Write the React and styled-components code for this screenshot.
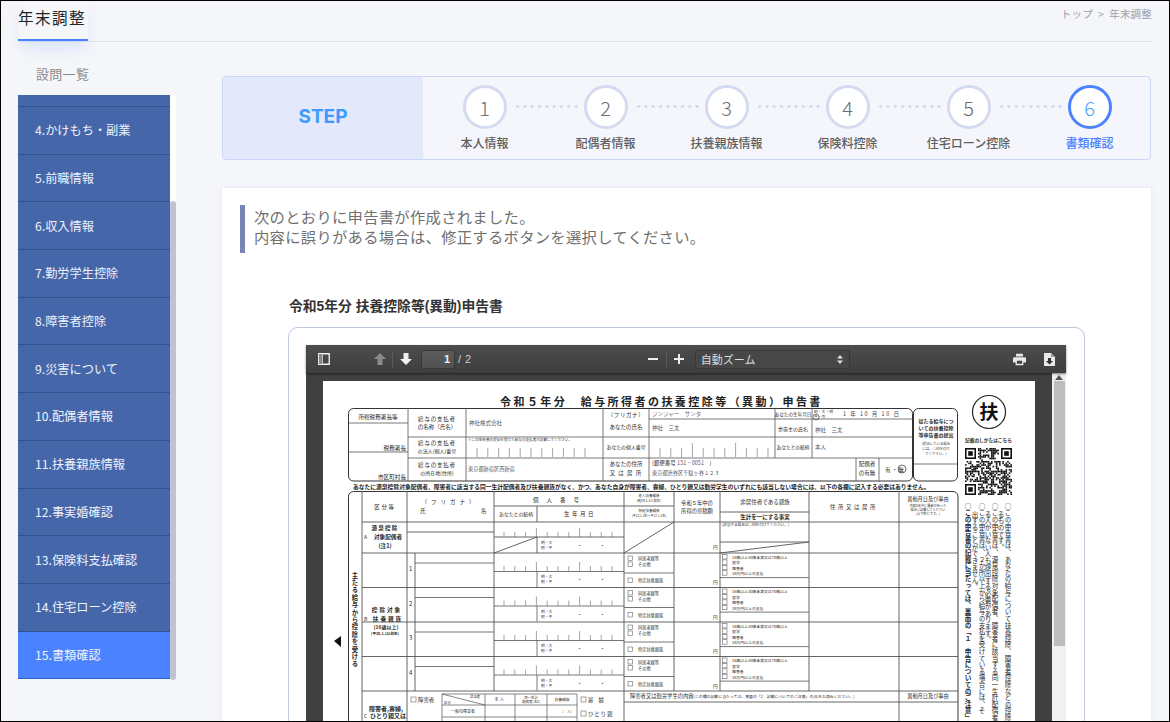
import React from "react";
import styled, { createGlobalStyle } from "styled-components";

const Global = createGlobalStyle`
  html, body { margin: 0; padding: 0; background: #f5f6fa; }
  body { font-family: "Noto Sans CJK JP", "Noto Sans", sans-serif; }
  * { box-sizing: border-box; }
`;

const Frame = styled.div`
  width: 1170px; height: 722px; border: 1px solid #000; overflow: hidden;
  background: #f5f6fa; padding: 0 17px; display: flex; flex-direction: column;
`;
const Header = styled.header`
  height: 41px; flex: none; display: flex; justify-content: space-between; align-items: flex-start;
  border-bottom: 1px solid #dfe3f0;
`;
const PageTitle = styled.h1`
  margin: 0; height: 40px; width: 70px; padding-top: 4px; font-size: 15.5px; line-height: 25px; font-weight: 400;
  letter-spacing: 1.5px; color: #222; white-space: nowrap;
  border-bottom: 2px solid #4a82ff; box-shadow: 0 10px 16px -4px rgba(74,130,255,.18);
`;
const Crumbs = styled.div`
  font-size: 10.5px; color: #a0a0a8; padding-top: 5px; line-height: 16px; letter-spacing: .2px;
`;
const Body = styled.div`display: flex; flex: 1; min-height: 0; gap: 46px;`;
const Aside = styled.aside`width: 158px; flex: none; display: flex; flex-direction: column;`;
const AsideTitle = styled.div`
  height: 53px; padding: 22px 0 0 18px; font-size: 13px; line-height: 20px; color: #8a8a8a; letter-spacing: .3px;
`;
const MenuWrap = styled.div`display: flex; height: 585px;`;
const Menu = styled.ul`list-style: none; margin: 0; padding: 0; width: 152px; overflow: hidden;`;
const MenuStub = styled.li`height: 12px; background: #4666aa; border-bottom: 1px solid #34508f;`;
const MenuItem = styled.li`
  height: 47.7px; padding: 0 0 0 17px; display: flex; align-items: center;
  font-size: 12.2px; color: #eef2fb;
  background: ${p => (p.$active ? "#4a82ff" : "#4666aa")};
  border-bottom: 1px solid ${p => (p.$active ? "#2f5fc8" : "#34508f")};
`;
const Track = styled.div`
  width: 6px; background: #fff; padding-top: 106px; display: flex; border-radius: 0 3px 3px 0;
`;
const Thumb = styled.div`flex: 1; background: #c2c3d2; border-radius: 3px;`;

const Main = styled.main`flex: 1; min-width: 0; padding-top: 34px; padding-right: 1px;`;
const StepCard = styled.section`
  height: 84px; display: flex; border: 1px solid #c9d6f7; border-radius: 4px; overflow: hidden; background: #f5f6fb;
`;
const StepHead = styled.div`
  width: 200px; flex: none; background: #e3e8fb; color: #3d9bff; font: 700 19px/1 "Inter", "Liberation Sans", sans-serif;
  display: flex; align-items: center; justify-content: center; padding-bottom: 4px;
`;
const Steps = styled.ol`
  list-style: none; margin: 0 0 0 1px; padding: 0; flex: 1; display: grid; grid-template-columns: repeat(6, 121px);
`;
const Step = styled.li`
  position: relative; display: flex; flex-direction: column; align-items: center; padding-top: 8px;
`;
const Dots = styled.span`
  position: absolute; left: 90px; top: 28px; width: 66px; height: 3px;
  background: radial-gradient(circle, #d4d9ee 1.4px, transparent 1.6px) 0 0 / 7.3px 3px repeat-x;
`;
const Circle = styled.span`
  width: 44px; height: 44px; border-radius: 50%; background: #fff; display: flex; align-items: center; justify-content: center;
  border: ${p => (p.$active ? "3px solid #4a82ff" : "3px solid #d5daf0")};
  color: ${p => (p.$active ? "#4a9eff" : "#6d6d6d")};
  font-size: 20px; font-weight: 300;
`;
const StepLabel = styled.span`
  margin-top: 5px; font-size: 12px; line-height: 17px; font-weight: 500; white-space: nowrap;
  color: ${p => (p.$active ? "#4a82ff" : "#5f5f5f")};
`;

const Card = styled.section`
  margin-top: 28px; background: #fff; height: 540px; padding: 17px 17px 0 18px;
  box-shadow: 0 0 4px rgba(180,185,210,.25);
`;
const Notice = styled.div`
  border-left: 5px solid #7a84b4; padding: 1px 0 0 9px; font-size: 15.3px; line-height: 20px; height: 48px; color: #707070;
  letter-spacing: .3px; white-space: nowrap;
`;
const DocTitle = styled.h2`
  margin: 44px 0 0 49px; font-size: 13.8px; line-height: 20px; font-weight: 700; color: #333; font-family: "Liberation Sans", "Noto Sans CJK JP", sans-serif;
`;
const DocBox = styled.div`
  margin: 10px 49px 0 48px; border: 1px solid #bcc6e2; border-radius: 10px; padding: 17px 18px 0 17px; height: 420px;
`;
const Viewer = styled.div`background: #404040; height: 380px;`;
const Toolbar = styled.div`
  height: 28px; display: flex; align-items: center; background: linear-gradient(#4c4c4c, #3e3e3e);
  box-shadow: 0 1px 2px rgba(0,0,0,.5); color: #e4e4e4; padding: 0 8px 0 11px; font-size: 11px;
  position: relative;
`;
const Tool = styled.span`display: inline-flex; width: 13px; justify-content: center; color: #e6e6e6;`;
const Sep = styled.span`width: 1px; height: 15px; background: #5a5a5a; margin: 0 6px 0 ${p => p.$l || 6}px;`;
const PageInput = styled.span`
  width: 34px; height: 19px; margin-left: 9px; border-radius: 2px; background: linear-gradient(#5b5b5b, #515151);
  border: 1px solid #383838; text-align: right; padding-right: 4px; font: 700 11px/17px "Liberation Sans", sans-serif; color: #eee;
`;
const PageCount = styled.span`margin-left: 3px; font: 11px "Liberation Sans", sans-serif; letter-spacing: .5px; color: #ccc;`;
const ZoomSelect = styled.span`
  width: 155px; height: 19px; margin-left: 9px; border: 1px solid #383838; border-radius: 2px; background: #474747;
  display: flex; align-items: center; justify-content: space-between; padding: 0 6px 0 5px; font-size: 11px; color: #ddd;
`;
const Stage = styled.div`display: flex; height: 352px; padding-top: 8px;`;
const Sheet = styled.div`margin-left: 17px; width: 712px; height: 341px; background: #fff; flex: none; overflow: hidden;`;
const VScroll = styled.div`
  margin-left: 17px; margin-top: -8px; width: 14px; background: #f0f0f0; padding: 2px 1px 0 2px; height: 352px;
  display: flex; flex-direction: column;
`;
const VThumb = styled.div`height: 265px; background: #bdbdbd; margin-top: 1px;`;
const FormSvg = styled.svg`display: block;`;
const T = styled.text`
  font-family: "Noto Sans CJK JP", sans-serif; fill: ${p => p.$c || "#2a2a2a"};
  font-weight: ${p => p.$b ? 700 : 400};
`;
const VT = styled(T)`writing-mode: vertical-rl;`;

const menu = ["4.かけもち・副業","5.前職情報","6.収入情報","7.勤労学生控除","8.障害者控除","9.災害について","10.配偶者情報","11.扶養親族情報","12.事実婚確認","13.保険料支払確認","14.住宅ローン控除","15.書類確認"];
const steps = ["本人情報","配偶者情報","扶養親族情報","保険料控除","住宅ローン控除","書類確認"];

const Lines = ({ list, w = 0.8, c = "#555" }) => (
  <g stroke={c} strokeWidth={w}>
    {list.map((l, i) => <line key={i} x1={l[0]} y1={l[1]} x2={l[2]} y2={l[3]} />)}
  </g>
);
const Ticks = ({ x0, dx, n, y, h = 5, long = 9, every = 4 }) => (
  <g stroke="#666" strokeWidth=".6">
    {Array.from({ length: n }, (_, i) => (
      <line key={i} x1={x0 + i * dx} x2={x0 + i * dx} y1={y} y2={y - (i % every === every - 1 ? long : h)} />
    ))}
  </g>
);
const Label = ({ x, y, s = 5.5, a = "start", b, c, ls, children }) => (
  <T x={x} y={y} fontSize={s} textAnchor={a} $b={b} $c={c} letterSpacing={ls}>{children}</T>
);
const Box = ({ x, y, s = 4.5 }) => <rect x={x} y={y} width={s} height={s} fill="#fff" stroke="#666" strokeWidth=".6" />;

const qrCells = (() => {
  const out = [];
  let seed = 73;
  for (let r = 0; r < 29; r++) for (let c = 0; c < 29; c++) {
    seed = (seed * 1103515245 + 12345) & 0x7fffffff;
    const corner = (r < 8 && c < 8) || (r < 8 && c > 20) || (r > 20 && c < 8);
    if (!corner && (seed >> 16) % 100 < 52) out.push([c, r]);
  }
  return out;
})();
const Finder = ({ x, y }) => (
  <g>
    <rect x={x} y={y} width="11" height="11" fill="#111" />
    <rect x={x + 1.6} y={y + 1.6} width="7.8" height="7.8" fill="#fff" />
    <rect x={x + 3.2} y={y + 3.2} width="4.6" height="4.6" fill="#111" />
  </g>
);

const rowTops = [553, 587.5, 622, 656.5];

const FormPage = () => (
  <FormSvg width="712" height="341" viewBox="323 381 712 341" role="img">
    <Label x={500} y={406} s={11} b ls={2.45} c="#222">令和５年分　給与所得者の扶養控除等（異動）申告書</Label>

    {/* top block */}
    <rect x="348.5" y="408.5" width="564" height="72.5" rx="5" fill="none" stroke="#333" strokeWidth="1" />
    <rect x="913.5" y="408.5" width="44" height="72.5" rx="5" fill="none" stroke="#333" strokeWidth="1" />
    <Lines list={[
      [408,408,408,481],[466,408,466,481],[603,408,603,481],[649,408,649,481],[775,408,775,458],[812,408,812,458],
      [349,423,408,423],[349,452,408,452],[408,437,912,437],[408,458,912,458],[649,419,912,419],
      [856,458,856,481],[879,458,879,481],[914,464,957,464],
    ]} />
    <Label x={378} y={419} a="middle" s={5.6}>所轄税務署長等</Label>
    <Label x={406} y={450} a="end" s={5.6}>税務署長</Label>
    <Label x={406} y={479} a="end" s={5.6}>市区町村長</Label>
    <Label x={437} y={421} a="middle" ls={.8}>給与の支払者</Label>
    <Label x={437} y={429} a="middle">の名称（氏名）</Label>
    <Label x={437} y={445} a="middle" ls={.8}>給与の支払者</Label>
    <Label x={437} y={453} a="middle" s={5}>の法人(個人)番号</Label>
    <Label x={437} y={467} a="middle" ls={.8}>給与の支払者</Label>
    <Label x={437} y={475} a="middle" s={5}>の所在地(住所)</Label>
    <Label x={469} y={425} c="#556">神社株式会社</Label>
    <Label x={468} y={441} s={3.6}>※この申告書の提出を受けた給与の支払者が記載してください。</Label>
    <Ticks x0={477} dx={10.8} n={11} y={457} h={9} long={9} />
    <Label x={468} y={471} c="#556" s={5.2}>東京都新宿区西新宿</Label>
    <Label x={626} y={417} a="middle" ls={.6}>（フリガナ）</Label>
    <Label x={626} y={429} a="middle">あなたの氏名</Label>
    <Label x={626} y={449} a="middle" s={4.9}>あなたの個人番号</Label>
    <Label x={626} y={466} a="middle">あなたの住所</Label>
    <Label x={626} y={475} a="middle" ls={1}>又 は 居 所</Label>
    <Label x={652} y={416} c="#667">ジンジャー　サンタ</Label>
    <Label x={652} y={430} c="#556">神社　三太</Label>
    <Ticks x0={660} dx={10.8} n={11} y={457} h={9} long={14} />
    <Label x={652} y={465}>(郵便番号 <tspan fill="#557">151 − 0051</tspan>　)</Label>
    <Label x={652} y={475} c="#556" s={5.2}>東京都渋谷区千駄ヶ谷１２３</Label>
    <Label x={793} y={416} a="middle" s={4.6}>あなたの生年月日</Label>
    <Label x={793} y={431} a="middle" s={5}>世帯主の氏名</Label>
    <Label x={793} y={449} a="middle" s={4.7}>あなたとの続柄</Label>
    <Label x={814} y={413} s={3.8}>昭・大・明</Label>
    <Label x={814} y={418} s={3.8}>平・令</Label>
    <circle cx="816" cy="417" r="3" fill="none" stroke="#333" strokeWidth=".6" />
    <Label x={843} y={416} c="#445" ls={1.5}>1 年 10 月 10 日</Label>
    <Label x={815} y={432} c="#556">神社　三太</Label>
    <Label x={815} y={449} c="#556">本人</Label>
    <Label x={867} y={466} a="middle">配偶者</Label>
    <Label x={867} y={475} a="middle">の有無</Label>
    <Label x={895} y={472} a="middle" ls={1}>有・無</Label>
    <circle cx="902" cy="469" r="4" fill="none" stroke="#333" strokeWidth=".7" />
    <Label x={936} y={423} a="middle" s={5} b>従たる給与につ</Label>
    <Label x={936} y={430} a="middle" s={5} b>いての扶養控除</Label>
    <Label x={936} y={437} a="middle" s={5} b>等申告書の提出</Label>
    <Label x={936} y={445} a="middle" s={3.4}>(提出している場合</Label>
    <Label x={936} y={450} a="middle" s={3.4}>には、○印を付け</Label>
    <Label x={936} y={455} a="middle" s={3.4}>てください。)</Label>

    {/* seal and qr */}
    <circle cx="989" cy="412" r="16.5" fill="#fff" stroke="#222" strokeWidth="1.2" />
    <Label x={989} y={419} a="middle" s={19} b c="#111">扶</Label>
    <Label x={965} y={442} s={4.7} b>記載のしかたはこちら</Label>
    <g fill="#111">
      {qrCells.map(([c, r]) => <rect key={`${c}-${r}`} x={965 + c * 1.62} y={448 + r * 1.62} width="1.62" height="1.62" />)}
    </g>
    <Finder x={965} y={448} /><Finder x={1001} y={448} /><Finder x={965} y={484} />

    {/* note under top block */}
    <Label x={353} y={489} s={5.75} b ls={.02} c="#222">あなたに源泉控除対象配偶者、障害者に該当する同一生計配偶者及び扶養親族がなく、かつ、あなた自身が障害者、寡婦、ひとり親又は勤労学生のいずれにも該当しない場合には、以下の各欄に記入する必要はありません。</Label>

    {/* main table */}
    <rect x="348.5" y="491.5" width="609.5" height="260" rx="5" fill="none" stroke="#333" strokeWidth="1" />
    <Lines w={.9} list={[
      [362,491,362,722],[407,491,407,722],[494,491,494,691],[537,506,537,522],[624,491,624,722],[674,491,674,691],[720,491,720,691],[809,491,809,691],[899,491,899,722],
      [415,553,415,691],
      [362,522,958,522],[362,553,958,553],[362,587.5,958,587.5],[362,622,958,622],[362,656.5,958,656.5],[362,691,958,691],
      [494,506,624,506],[624,506,674,506],[720,512,809,512],
      [407,532,494,532],[494,537,624,537],[537,537,537,553],[494,553,537,537],[624,553,674,522],[720,542,809,542],[720,553,809,542],
      [624,702,958,702],
    ]} />
    {rowTops.map((t) => (
      <g key={t}>
        <Lines w={.8} list={[[415,t+10,494,t+10],[494,t+18.5,624,t+18.5],[537,t+18.5,537,t+34],[624,t+20,674,t+20],[720,t+24.6,809,t+24.6]]} />
        <Ticks x0={504} dx={10.8} n={11} y={t+18} h={5} long={9} />
        <Label x={541} y={t+25} s={3.8}>明・大</Label>
        <Label x={541} y={t+30} s={3.8}>昭・平</Label>
        <Label x={577} y={t+28} s={5}>・</Label>
        <Label x={600} y={t+28} s={5}>・</Label>
        <Box x={628} y={t+3} /><Box x={628} y={t+9} /><Box x={628} y={t+25} />
        <Label x={638} y={t+7} s={4.2}>同居老親等</Label>
        <Label x={638} y={t+13} s={4.2}>その他</Label>
        <Label x={638} y={t+29} s={4.2}>特定扶養親族</Label>
        {[0,1,2,3].map(i => <Box key={i} x={722.5} y={t+1.5+i*5.4} />)}
        <Label x={732} y={t+5.5} s={3.9}>16歳以上30歳未満又は70歳以上</Label>
        <Label x={732} y={t+11} s={3.9}>留学</Label>
        <Label x={732} y={t+16.5} s={3.9}>障害者</Label>
        <Label x={732} y={t+22} s={3.9}>38万円以上の支払</Label>
        <Label x={713} y={t+31} s={4.6}>円</Label>
      </g>
    ))}
    <Ticks x0={504} dx={10.8} n={11} y={537} h={5} long={9} />
    <Label x={541} y={544} s={3.8}>明・大</Label>
    <Label x={541} y={549} s={3.8}>昭・平</Label>
    <Label x={577} y={547} s={5}>・</Label>
    <Label x={600} y={547} s={5}>・</Label>
    <Label x={713} y={549} s={4.6}>円</Label>
    <Label x={722} y={525.5} s={3.6}>(該当する場合は○印を付けてください。)</Label>

    <Label x={385} y={509} a="middle" ls={1.6}>区分等</Label>
    <Label x={450} y={504} a="middle" ls={4}>（フリガナ）</Label>
    <Label x={420} y={513}>氏</Label>
    <Label x={481} y={513}>名</Label>
    <Label x={560} y={502} a="middle" ls={8}>個人番号</Label>
    <Label x={516} y={516} a="middle" s={4.9}>あなたとの続柄</Label>
    <Label x={580} y={516} a="middle" ls={2.5}>生年月日</Label>
    <Label x={649} y={497} a="middle" s={3.5}>老人扶養親族</Label>
    <Label x={649} y={502} a="middle" s={3.3}>(昭29.1.1以前生)</Label>
    <Label x={649} y={512} a="middle" s={3.5}>特定扶養親族</Label>
    <Label x={649} y={517} a="middle" s={3.1}>(平12.1.2生～平17.1.1生)</Label>
    <Label x={697} y={505} a="middle" s={5.3}>令和５年中の</Label>
    <Label x={697} y={513} a="middle" s={5.3}>所得の見積額</Label>
    <Label x={765} y={504} a="middle" s={5.5}>非居住者である親族</Label>
    <Label x={765} y={519} a="middle" s={5.5} b>生計を一にする事実</Label>
    <Label x={854} y={509} a="middle" ls={2.5}>住所又は居所</Label>
    <Label x={928} y={501} a="middle" s={5.2}>異動月日及び事由</Label>
    <Label x={928} y={507} a="middle" s={3.2}>令和5年中に異動があった</Label>
    <Label x={928} y={511} a="middle" s={3.2}>場合に記載してください</Label>
    <Label x={928} y={515} a="middle" s={3.2}>(以下同じです。)</Label>

    <VT x={355} y={572} fontSize={6.3} $b letterSpacing={1.1} textAnchor="start">主たる給与から控除を受ける</VT>
    <polygon points="334,641 341,636 341,647" fill="#111" />
    <Label x={385} y={530} a="middle" s={5.6} b ls={1.2}>源泉控除</Label>
    <Label x={364} y={539} s={5}>A</Label>
    <Label x={388} y={539} a="middle" s={5.6} b>対象配偶者</Label>
    <Label x={385} y={548} a="middle" s={5.6} b>(注1)</Label>
    <Label x={387} y={612} a="middle" s={5.6} b ls={2}>控除対象</Label>
    <Label x={364} y={621} s={5}>B</Label>
    <Label x={388} y={621} a="middle" s={5.6} b ls={2}>扶養親族</Label>
    <Label x={386} y={629} a="middle" s={5} b>(16歳以上)</Label>
    <Label x={385} y={635} a="middle" s={3.6} b>(平20.1.1以前生)</Label>
    {[[571,1],[606,2],[640,3],[675,4]].map(([y,n]) => <Label key={n} x={409} y={y} s={6}>{n}</Label>)}

    <Label x={386} y={711} a="middle" s={6} b>障害者,寡婦,</Label>
    <Label x={364} y={718} s={5}>C</Label>
    <Label x={388} y={718} a="middle" s={6} b>ひとり親又は</Label>
    <Box x={411} y={697} s={5} />
    <Label x={418} y={702} s={5.4}>障害者</Label>
    <Lines w={.7} list={[[442,694,577,694],[442,694,442,722],[485,694,485,722],[515,694,515,722],[547,694,547,722],[577,694,577,722],[442,705,577,705],[442,717,577,717],[442,694,485,705]]} />
    <Label x={470} y={698} s={3.4}>該当者</Label>
    <Label x={444} y={704} s={3.4}>区分</Label>
    <Label x={500} y={701} a="middle" s={4} ls={1.5}>本人</Label>
    <Label x={531} y={699} a="middle" s={3.4}>同一生計</Label>
    <Label x={531} y={703} a="middle" s={3.4}>配偶者(注2)</Label>
    <Label x={562} y={701} a="middle" s={3.8}>扶養親族</Label>
    <Label x={463} y={713} a="middle" s={4}>一般の障害者</Label>
    <Label x={574} y={713} a="end" s={3.4}>（　人）</Label>
    <Box x={581} y={697} s={5} />
    <Label x={588} y={702} s={5.4} ls={5}>寡婦</Label>
    <Box x={581} y={711} s={5} />
    <Label x={588} y={716} s={5.4} ls={1}>ひとり親</Label>
    <Label x={630} y={698} s={5.3}>障害者又は勤労学生の内容<tspan fontSize="3.9">(この欄の記載に当たっては、裏面の「2　記載についてのご注意」の(8)をお読みください。)</tspan></Label>
    <Label x={928} y={698} a="middle" s={5.2}>異動月日及び事由</Label>

    {/* side notes */}
    <VT x={1008} y={503} fontSize={6.6}>○この申告書は、あなたの給与について扶養控除、障害者控除などの控除</VT>
    <VT x={1001} y={511} fontSize={6.6}>るものです。</VT>
    <VT x={995} y={503} fontSize={6.6}>○この申告書は、源泉控除対象配偶者、障害者に該当する同一生計配偶者</VT>
    <VT x={988} y={511} fontSize={6.6}>る人がいない人も提出する必要があります。</VT>
    <VT x={982} y={503} fontSize={6.6}>○この申告書は、２か所以上から給与の支払を受けている場合には、そ</VT>
    <VT x={975} y={511} fontSize={6.6}>出することができません。</VT>
    <VT x={968} y={503} fontSize={6.6} $b>○この申告書の記載に当たっては、裏面の「１　申告についてのご注意」</VT>
  </FormSvg>
);

const Ico = {
  sidebar: <svg width="12" height="12" viewBox="0 0 12 12"><path d="M.75.75h10.5v10.5H.75zM4 1v10" fill="none" stroke="#eee" strokeWidth="1.4"/><rect x="1" y="1" width="3" height="10" fill="#888"/></svg>,
  up: <svg width="12" height="12" viewBox="0 0 12 12"><path d="M6 0 12 6H8.5V12h-5V6H0z" fill="#8a8a8a"/></svg>,
  down: <svg width="12" height="12" viewBox="0 0 12 12"><path d="M6 12 12 6H8.5V0h-5V6H0z" fill="#eee"/></svg>,
  print: <svg width="15" height="13" viewBox="0 0 15 13"><path d="M3.5 0h8v3h-8zM1.5 4h12A1.5 1.5 0 0 1 15 5.5V10h-3v3H3v-3H0V5.5A1.5 1.5 0 0 1 1.5 4zM4.5 8v3.5h6V8z" fill="#e8e8e8" fillRule="evenodd"/></svg>,
  save: <svg width="11" height="13" viewBox="0 0 11 13"><path d="M0 0h7l4 4v9H0z" fill="#e8e8e8"/><path d="M7 0v4h4z" fill="#999"/><path d="M4 5h3v3h2L5.5 11.5 2 8h2z" fill="#333"/></svg>,
  updown: <svg width="6" height="9" viewBox="0 0 6 9"><path d="M3 0 6 3.4H0zM3 9 0 5.6h6z" fill="#ddd"/></svg>,
  minus: <svg width="10" height="10" viewBox="0 0 10 10"><rect y="4" width="10" height="2" fill="#eee"/></svg>,
  plus: <svg width="10" height="10" viewBox="0 0 10 10"><path d="M4 0h2v4h4v2H6v4H4V6H0V4h4z" fill="#eee"/></svg>,
};

const ToolSpacer = styled.span`width: ${p => p.$w}px; flex: none;`;
const ScrollUp = styled.svg`display: block; margin-left: 1px; flex: none;`;

export default function App() {
  return (
    <Frame>
      <Global />
      <Header>
        <PageTitle>年末調整</PageTitle>
        <Crumbs>トップ &nbsp;&gt;&nbsp; 年末調整</Crumbs>
      </Header>
      <Body>
        <Aside>
          <AsideTitle>設問一覧</AsideTitle>
          <MenuWrap>
            <Menu>
              <MenuStub />
              {menu.map((m, i) => <MenuItem key={m} $active={i === menu.length - 1}>{m}</MenuItem>)}
            </Menu>
            <Track><Thumb /></Track>
          </MenuWrap>
        </Aside>
        <Main>
          <StepCard>
            <StepHead>STEP</StepHead>
            <Steps>
              {steps.map((s, i) => (
                <Step key={s}>
                  <Circle $active={i === 5}>{i + 1}</Circle>
                  <StepLabel $active={i === 5}>{s}</StepLabel>
                  {i < 5 && <Dots />}
                </Step>
              ))}
            </Steps>
          </StepCard>
          <Card>
            <Notice>次のとおりに申告書が作成されました。<br />内容に誤りがある場合は、修正するボタンを選択してください。</Notice>
            <DocTitle>令和5年分 扶養控除等(異動)申告書</DocTitle>
            <DocBox>
              <Viewer>
                <Toolbar>
                  <Tool>{Ico.sidebar}</Tool>
                  <ToolSpacer $w={43} />
                  <Tool>{Ico.up}</Tool>
                  <Sep />
                  <Tool>{Ico.down}</Tool>
                  <PageInput>1</PageInput>
                  <PageCount>/ 2</PageCount>
                  <ToolSpacer $w={175} />
                  <Tool>{Ico.minus}</Tool>
                  <Sep />
                  <Tool>{Ico.plus}</Tool>
                  <ZoomSelect>自動ズーム{Ico.updown}</ZoomSelect>
                  <ToolSpacer $w={163} />
                  <Tool>{Ico.print}</Tool>
                  <ToolSpacer $w={17} />
                  <Tool>{Ico.save}</Tool>
                </Toolbar>
                <Stage>
                  <Sheet><FormPage /></Sheet>
                  <VScroll>
                    <ScrollUp width="8" height="5" viewBox="0 0 8 5"><path d="M4 0 8 5H0z" fill="#555" /></ScrollUp>
                    <VThumb />
                  </VScroll>
                </Stage>
              </Viewer>
            </DocBox>
          </Card>
        </Main>
      </Body>
    </Frame>
  );
}
